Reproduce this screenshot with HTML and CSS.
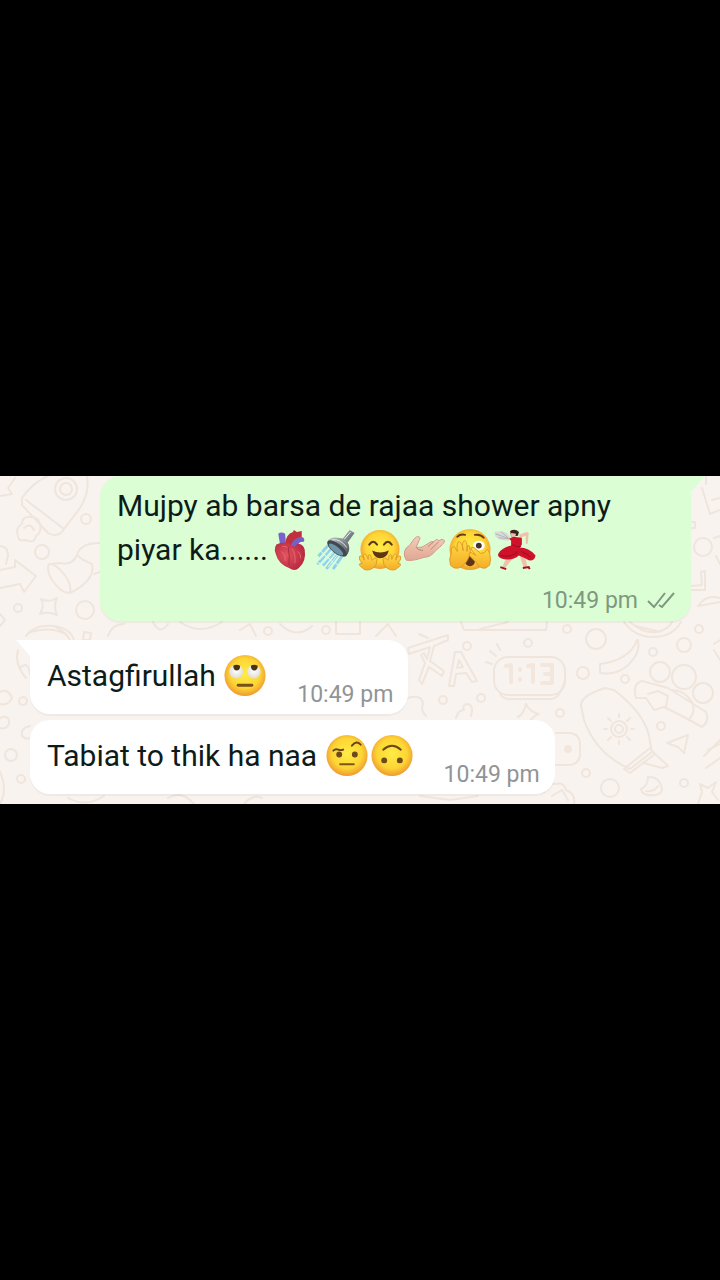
FILE: index.html
```html
<!DOCTYPE html>
<html lang="en">
<head>
    <meta charset="UTF-8">
    <meta name="viewport" content="width=device-width, initial-scale=1.0">
    <title>Chat</title>
    <link rel="stylesheet" href="styles.css">
</head>
<body>
    <main class="chat">
        <!-- Wallpaper doodles -->
        <svg class="wallpaper" viewBox="0 476 720 328" preserveAspectRatio="xMidYMid slice" aria-hidden="true">
            <!-- left side -->
            <path d="M22 498 Q32 483 48 476 M87 476 Q90 492 80 508 L61 533 Q55 537 48 533 L22 505 V498 M26 500 L64 529 M40 524 Q38 516 30 517 Q22 516 22 524 Q15 528 18 536 Q18 542 26 540 Q34 544 36 536 Q42 532 40 524 M24 528 Q30 522 34 530 M0 496 L12 494 L8 488 L15 478"/>
            <circle cx="66" cy="489" r="11"/>
            <circle cx="66" cy="489" r="6"/>
            <circle cx="86" cy="519" r="5"/>
            <circle cx="42" cy="552" r="7"/>
            <path d="M0 546 Q8 546 8 556 L6 564 M0 570 L15 567 V560 L36 576 L24 592 L20 584 L0 588"/>
            <path d="M49 564 Q46 570 52 580 Q62 594 70 593 Q72 584 64 574 Q56 564 49 564 L60 563 Q72 566 77 555 Q82 560 92 564 Q96 580 70 593 M77 555 Q80 543 100 543 M94 574 L100 572"/>
            <path d="M41 599 Q49 603 57 598 Q53 606 57 615 Q48 611 40 614 Q45 606 41 599"/>
            <circle cx="18" cy="608" r="4"/>
            <circle cx="85" cy="610" r="9"/>
            <path d="M26 636 Q34 624 54 626 Q70 628 74 640 M30 632 Q50 626 66 634 M54 626 Q66 632 70 640 M108 636 Q112 624 124 624 M84 632 L91 633 L90 640 H83 Z M0 614 L5 620 L0 626"/>
            <path d="M18 650 Q14 664 26 678 M20 668 Q28 660 30 674"/>
            <circle cx="23" cy="701" r="4"/>
            <path d="M0 692 Q8 688 12 698 Q8 706 0 704 M0 718 Q10 714 9 724 Q6 730 0 728 M30 726 Q20 728 22 736 Q26 740 30 738"/>
            <circle cx="11" cy="755" r="6"/>
            <circle cx="21" cy="779" r="4"/>
            <path d="M0 772 Q8 790 0 804 M68 798 Q86 808 104 796 M168 798 Q182 790 194 804 M244 804 Q252 794 262 798"/>

            <!-- strip between the sent and the received bubbles -->
            <path d="M153 622 Q160 636 168 624 M180 622 Q200 636 222 622 M240 630 L250 624 L256 636 M280 624 Q296 640 312 626 M336 622 V634 H360 V622 M376 636 L388 624 L396 636"/>
            <circle cx="268" cy="631" r="4"/>
            <circle cx="326" cy="630" r="4"/>
            <path d="M461 622 L464 630 H546 L547 622 M480 629 L508 622"/>

            <!-- letters, clock and stars -->
            <path d="M408 648 L448 635 V640 L434 646 L430 661 L444 671 L442 676 L429 667 L422 684 L419 680 L425 663 L421 655 L424 653 L427 659 L430 647 L409 654 Z M419 634 L428 638"/>
            <path d="M449 686 L455 652 H461 L477 681 L472 682 L466 673 L456 674 L454 686 Z M457 668 L463 667 L459 660 Z"/>
            <circle cx="467" cy="646" r="4"/>
            <circle cx="528" cy="643" r="4"/>
            <circle cx="567" cy="629" r="4"/>
            <rect x="494" y="657" width="71" height="38" rx="14"/>
            <path d="M500 694 Q504 700 512 699 L552 699 Q560 698 565 680 M486 662 L492 664 M490 651 L496 656 M497 644 L500 650"/>
            <path class="faint" d="M506 666 L511 665 V682 M520 669 V670 M520 679 V680 M528 666 L533 665 V682 M542 665 H552 V683 H542 M545 674 H552"/>
            <circle cx="583" cy="673" r="6"/>
            <circle cx="443" cy="700" r="4"/>
            <circle cx="481" cy="698" r="4"/>
            <circle cx="560" cy="713" r="4"/>
            <path d="M526 704 Q530 712 539 714 Q532 716 529 724 M526 704 Q524 714 518 717 M408 698 Q422 694 423 704 Q420 710 426 716 M456 718 Q458 710 464 710 Q462 704 468 704 Q474 706 471 716"/>

            <!-- balls, banana and sun lotion -->
            <path d="M624 622 Q634 636 650 637 Q672 638 681 622 M630 622 Q644 634 656 632 Q668 630 672 622 M636 626 L660 632 M637 640 Q630 660 600 664 V673 Q622 676 634 658 Q640 650 638 640"/>
            <circle cx="596" cy="639" r="10"/>
            <circle cx="684" cy="645" r="7"/>
            <circle cx="699" cy="629" r="4"/>
            <circle cx="653" cy="652" r="4"/>
            <circle cx="625" cy="679" r="4"/>
            <circle cx="660" cy="672" r="10"/>
            <circle cx="684" cy="677" r="12"/>
            <circle cx="703" cy="693" r="10"/>
            <path d="M636 698 Q632 684 642 681 L668 688 L706 712 Q710 722 702 727 L682 716 L664 707 L654 710 L646 698 Z M648 694 L658 691 L668 696 L666 706 M672 690 Q684 690 692 702 Q696 712 690 718"/>
            <path d="M581 706 Q580 696 605 688 L614 690 Q648 716 650 742 L652 752 L630 769 Q596 754 584 720 Z M624 769 L650 748 L655 754 L630 773 Z M655 754 L668 766 L662 768 L644 763"/>
            <circle cx="619" cy="729" r="8"/>
            <circle cx="619" cy="729" r="4"/>
            <path d="M619 714 V717 M619 741 V744 M604 729 H607 M631 729 H634 M608 718 L611 721 M627 737 L630 740 M608 740 L611 737 M627 721 L630 718"/>
            <circle cx="661" cy="726" r="4"/>
            <path d="M667 743 L688 735 L684 753 L678 747 Z M704 756 L720 740 M706 768 L720 758 M708 750 L720 744"/>
            <path d="M556 733 H570 Q580 734 580 745 V756 Q578 765 568 765 H556"/>
            <circle class="faint" cx="568" cy="749" r="2"/>
            <circle cx="586" cy="773" r="4"/>
            <circle cx="610" cy="788" r="9"/>
            <circle cx="684" cy="783" r="4"/>
            <path d="M641 789 Q648 786 648 777 Q660 776 662 790 Q660 796 652 795 Q642 796 641 789 M646 791 Q654 792 658 786"/>
            <path d="M544 792 Q546 782 556 784 Q564 782 566 790 Q576 794 574 804 M552 796 L562 790 L568 800 M698 804 L702 792 L700 784 L708 788 L716 782 L712 792 L718 800 M420 796 L450 800 L478 796"/>

            <!-- right edge -->
            <path d="M702 488 L710 514 L720 510 M706 484 V476 M712 500 L720 498 M692 522 H695 V528 H692"/>
            <circle cx="703" cy="547" r="9"/>
            <path d="M692 586 L702 585 L701 572 L705 571 V590 H692 M698 606 Q706 594 720 598 M698 606 L720 602 M714 644 L720 640 M714 650 L720 660 M714 538 L720 536 M716 556 L720 564"/>
        </svg>

        <div class="bubble sent">
            <p class="text">Mujpy ab barsa de rajaa shower apny<br>piyar ka......<svg class="emoji" viewBox="0 0 45 45" role="img" aria-label="anatomical heart">
                    <defs>
                        <radialGradient id="heart" cx="40%" cy="45%" r="65%">
                            <stop offset="0" stop-color="#e2535d"/>
                            <stop offset="1" stop-color="#b52540"/>
                        </radialGradient>
                        <radialGradient id="face" cx="50%" cy="45%" r="56%">
                            <stop offset="0" stop-color="#ffec45"/>
                            <stop offset="0.65" stop-color="#fdd535"/>
                            <stop offset="1" stop-color="#ee9630"/>
                        </radialGradient>
                        <linearGradient id="hand" x1="0" y1="0" x2="0" y2="1">
                            <stop offset="0" stop-color="#ffdb45"/>
                            <stop offset="1" stop-color="#f3ac26"/>
                        </linearGradient>
                        <linearGradient id="metal" x1="0" y1="0" x2="1" y2="1">
                            <stop offset="0" stop-color="#c3c8cc"/>
                            <stop offset="0.5" stop-color="#7f868c"/>
                            <stop offset="1" stop-color="#454b52"/>
                        </linearGradient>
                        <linearGradient id="skin" x1="0" y1="0" x2="0" y2="1">
                            <stop offset="0" stop-color="#f3cdb9"/>
                            <stop offset="1" stop-color="#dfa793"/>
                        </linearGradient>
                        <radialGradient id="eyewhite" cx="50%" cy="45%" r="60%">
                            <stop offset="0" stop-color="#ffffff"/>
                            <stop offset="1" stop-color="#dcdad0"/>
                        </radialGradient>
                    </defs>
                    <path d="M17 16 Q18 6 25 4 L26 2 L29 4 L34 3 L34 8 Q34 12 30 17 Z" fill="#c1303f"/>
                    <path d="M10 6 Q13 3 17 6 L18 17 L12 18 Z" fill="#7763c9"/>
                    <path d="M8 17 Q15 13 23 16 Q35 14 37 22 Q39 34 31 41 Q27 45 21 41 Q10 36 8 28 Q5 22 8 17 Z" fill="url(#heart)"/>
                    <path d="M23 18 Q25 10 34 9 Q38 11 36 14 Q30 14 27 19 Z" fill="#7561c5"/>
                    <path d="M13 24 Q18 27 17 34 M24 21 Q28 26 27 36 M30 24 Q33 26 33 31 M14 19 Q19 18 21 22" fill="none" stroke="#e7686f" stroke-width="1"/>
                    <path d="M20 19 Q22 28 21 38" fill="none" stroke="#a82a42" stroke-width="1"/>
                </svg><svg class="emoji" viewBox="0 0 45 45" role="img" aria-label="shower">
                    <path d="M15 18 L5 29 M18 21 L4 37 M22 24 L9 39 M25 27 L13 42 M29 29 L20 42" fill="none" stroke="#8fd3ea" stroke-width="3" stroke-dasharray="9 1"/>
                    <path d="M17 20 L6 33 M21 24 L9 37 M25 27 L15 40" fill="none" stroke="#e4f9f6" stroke-width="1"/>
                    <path d="M29 12 L37 2 L42 5 L34 16 Z" fill="url(#metal)"/>
                    <path d="M31 12 L38 4" stroke="#edf0f1" stroke-width="1"/>
                    <path d="M14 14 Q17 9 25 10 Q33 10 36 17 Q38 24 33 29 Z" fill="url(#metal)"/>
                    <ellipse cx="24" cy="21" rx="12" ry="5" transform="rotate(38 24 21)" fill="#41494f"/>
                    <ellipse cx="23" cy="22" rx="9" ry="3" transform="rotate(38 23 22)" fill="#6f96a8"/>
                    <path d="M19 12 Q28 11 34 20" fill="none" stroke="#dfe3e5" stroke-width="1"/>
                </svg><svg class="emoji" viewBox="0 0 45 45" role="img" aria-label="hugging face">
                    <circle cx="22" cy="22" r="20" fill="url(#face)"/>
                    <path d="M11 17 Q15 11 19 17 M26 17 Q30 11 34 17" fill="none" stroke="#593815" stroke-width="2" stroke-linecap="round"/>
                    <path d="M14 23 Q22 27 31 23 Q29 31 22 31 Q16 31 14 23 Z" fill="#613516"/>
                    <path d="M1 29 Q3 27 5 31 L6 33 L5 28 Q7 25 9 30 L10 32 L10 28 Q13 26 13 31 L14 33 Q17 29 19 32 Q19 38 15 41 Q8 45 4 41 L1 38 Q1 35 4 36 Q0 33 1 29 Z" fill="url(#hand)" stroke="#e09a28" stroke-width="1"/>
                    <path d="M43 29 Q41 27 39 31 L38 33 L39 28 Q37 25 35 30 L34 32 L34 28 Q31 26 31 31 L30 33 Q27 29 25 32 Q25 38 29 41 Q36 45 40 41 L43 38 Q43 35 40 36 Q44 33 43 29 Z" fill="url(#hand)" stroke="#e09a28" stroke-width="1"/>
                </svg><svg class="emoji" viewBox="0 0 45 45" role="img" aria-label="palm up hand">
                    <path d="M1 24 Q2 20 6 18 L11 11 Q15 7 17 10 L13 20 Q19 21 25 16 Q28 13 31 14 Q34 10 36 13 Q40 10 42 13 Q42 16 33 23 Q28 30 21 30 Q10 34 3 33 Q0 29 1 24 Z" fill="url(#skin)" stroke="#cf9c8b" stroke-width="1"/>
                    <path d="M25 19 L31 14 M28 22 L36 14 M13 20 Q15 23 20 23" fill="none" stroke="#bd8377" stroke-width="1"/>
                </svg><svg class="emoji" viewBox="0 0 45 45" role="img" aria-label="face with peeking eye">
                    <circle cx="22" cy="22" r="21" fill="url(#face)"/>
                    <path d="M9 9 Q12 6 17 7 M27 7 Q33 6 36 10" fill="none" stroke="#643d18" stroke-width="2" stroke-linecap="round"/>
                    <ellipse cx="31" cy="18" rx="6" ry="5" fill="#fff"/>
                    <circle cx="31" cy="18" r="3" fill="#4b3323"/>
                    <ellipse cx="22" cy="34" rx="5" ry="5" fill="#5e3517"/>
                    <path d="M2 38 Q0 31 3 26 Q2 19 6 19 L9 24 Q8 14 11 14 Q14 15 15 23 Q13 13 17 13 Q20 16 19 24 Q18 17 21 18 Q24 23 21 29 Q18 38 10 41 Q5 42 2 38 Z" fill="url(#hand)" stroke="#e09a28" stroke-width="1"/>
                    <path d="M42 38 Q44 31 42 26 Q40 19 37 25 L33 26 L26 20 Q21 19 24 23 L28 28 L23 25 Q19 26 23 30 L28 35 Q32 42 38 41 Z" fill="url(#hand)" stroke="#e09a28" stroke-width="1"/>
                </svg><svg class="emoji" viewBox="0 0 45 45" role="img" aria-label="woman dancing">
                    <path d="M1 4 L8 3 L14 5 L18 11 L15 13 L7 12 L2 9 Z" fill="#d8dcd8"/>
                    <path d="M2 6 L16 11 M8 4 L16 11 M5 10 L16 11" stroke="#b4b3b5" stroke-width="1"/>
                    <path d="M17 3 Q22 0 26 4 L25 8 L18 9 Z" fill="#3b2220"/>
                    <path d="M18 5 L23 6 L22 10 L18 9 Z M26 7 L34 4 L36 5 L35 16 L33 16 L33 8 L27 10 Z M13 31 L9 40 L12 41 L19 32 Z M27 29 L31 41 L35 41 L32 28 Z" fill="#efc1ac"/>
                    <path d="M16 11 L20 9 L29 10 L29 17 L27 20 Q36 20 43 28 Q42 34 36 33 Q29 29 26 28 Q20 33 11 32 Q3 30 5 26 Q9 20 18 18 L18 13 Z" fill="#cf1229"/>
                    <path d="M7 28 Q18 31 25 24 M19 17 Q24 20 28 19 M28 24 Q34 26 38 30" fill="none" stroke="#980e22" stroke-width="1"/>
                    <path d="M7 40 L13 42 M30 41 L36 40 L37 42" fill="none" stroke="#a31023" stroke-width="2"/>
                </svg></p>
            <div class="meta">
                <time datetime="22:49">10:49 pm</time>
                <svg class="ticks" viewBox="0 0 30 20" role="img" aria-label="delivered">
                    <path d="M2 10 L8 16 L19 2 M13 14 L16 16 L28 2"/>
                </svg>
            </div>
        </div>

        <div class="bubble received first">
            <p class="text">Astagfirullah <svg class="emoji" viewBox="0 0 45 45" role="img" aria-label="face with rolling eyes">
                    <circle cx="22" cy="22" r="21" fill="url(#face)"/>
                    <circle cx="13" cy="18" r="7" fill="url(#eyewhite)"/>
                    <circle cx="31" cy="18" r="7" fill="url(#eyewhite)"/>
                    <path d="M10 12 Q13 10 17 12 Q17 17 13 17 Q10 16 10 12 Z M28 12 Q31 10 35 12 Q35 17 31 17 Q28 16 28 12 Z" fill="#4b3018"/>
                    <path d="M15 32 H29" stroke="#77501a" stroke-width="3" stroke-linecap="round"/>
                </svg></p>
            <div class="meta"><time datetime="22:49">10:49 pm</time></div>
        </div>

        <div class="bubble received">
            <p class="text">Tabiat to thik ha naa <svg class="emoji" viewBox="0 0 45 45" role="img" aria-label="face with raised eyebrow">
                    <circle cx="22" cy="22" r="21" fill="url(#face)"/>
                    <path d="M8 17 Q10 15 13 16 Q16 17 18 16 M27 12 Q32 6 36 11" fill="none" stroke="#654419" stroke-width="2" stroke-linecap="round"/>
                    <circle cx="14" cy="21" r="3" fill="#6d4a1c"/>
                    <circle cx="30" cy="21" r="3" fill="#6d4a1c"/>
                    <path d="M15 31 H29" stroke="#7a5719" stroke-width="2" stroke-linecap="round"/>
                </svg><svg class="emoji" viewBox="0 0 45 45" role="img" aria-label="upside-down face">
                    <circle cx="22" cy="22" r="21" fill="url(#face)"/>
                    <path d="M13 16 Q22 8 31 16" fill="none" stroke="#6a4719" stroke-width="2" stroke-linecap="round"/>
                    <circle cx="14" cy="27" r="3" fill="#6d4a1c"/>
                    <circle cx="30" cy="27" r="3" fill="#6d4a1c"/>
                </svg></p>
            <div class="meta"><time datetime="22:49">10:49 pm</time></div>
        </div>
    </main>
</body>
</html>
```
FILE: styles.css
```css
* {
    box-sizing: border-box;
}

body {
    font-family: Roboto, "Liberation Sans", sans-serif;
    background-color: #000;
    margin: 0;
    min-height: 100vh;
    display: flex;
    flex-direction: column;
    justify-content: center;
}

.chat {
    position: relative;
    display: flex;
    flex-direction: column;
    align-items: flex-start;
    padding: 0 29px 10px 30px;
    background-color: #f8f3ef;
    overflow: hidden;
}

.wallpaper {
    position: absolute;
    top: 0;
    left: 0;
    width: 100%;
    height: 100%;
    fill: none;
    stroke: #efe5dc;
    stroke-width: 2;
    stroke-linejoin: round;
    stroke-linecap: round;
}

.wallpaper .faint {
    stroke: #f3e6dd;
    stroke-width: 4;
}

.bubble {
    position: relative;
    border-radius: 20px;
    box-shadow: 0 2px 1px rgba(0, 0, 0, 0.04);
}

.text {
    margin: 0;
    font-size: 30px;
    line-height: 44px;
    color: #0d1c18;
}

.emoji {
    width: 45px;
    height: 44px;
    vertical-align: -12px;
}

.meta {
    display: flex;
    align-items: center;
    justify-content: flex-end;
    gap: 8px;
    font-size: 23px;
    line-height: 28px;
    color: #919496;
    white-space: nowrap;
}

.sent {
    align-self: flex-end;
    width: 100%;
    max-width: 591px;
    margin-bottom: 19px;
    padding: 8px 15px 6px 17px;
    border-top-right-radius: 0;
    background-color: #dcfed4;
}

.sent .meta {
    margin-top: 15px;
    color: #7f9880;
}

.sent::after,
.first::before {
    content: "";
    position: absolute;
    top: 0;
    width: 14px;
    height: 16px;
}

.sent::after {
    left: 100%;
    background-color: #dcfed4;
    clip-path: polygon(0 0, 100% 0, 0 100%);
}

.received {
    display: flex;
    align-items: flex-end;
    gap: 29px;
    padding: 14px 15px 5px 17px;
    background-color: #fff;
}

.received .text {
    margin-bottom: 11px;
}

.first {
    margin-bottom: 6px;
    border-top-left-radius: 0;
}

.first::before {
    right: 100%;
    background-color: #fff;
    clip-path: polygon(0 0, 100% 0, 100% 100%);
}

.ticks {
    width: 30px;
    height: 20px;
    fill: none;
    stroke: #7f9880;
    stroke-width: 2;
}
```
